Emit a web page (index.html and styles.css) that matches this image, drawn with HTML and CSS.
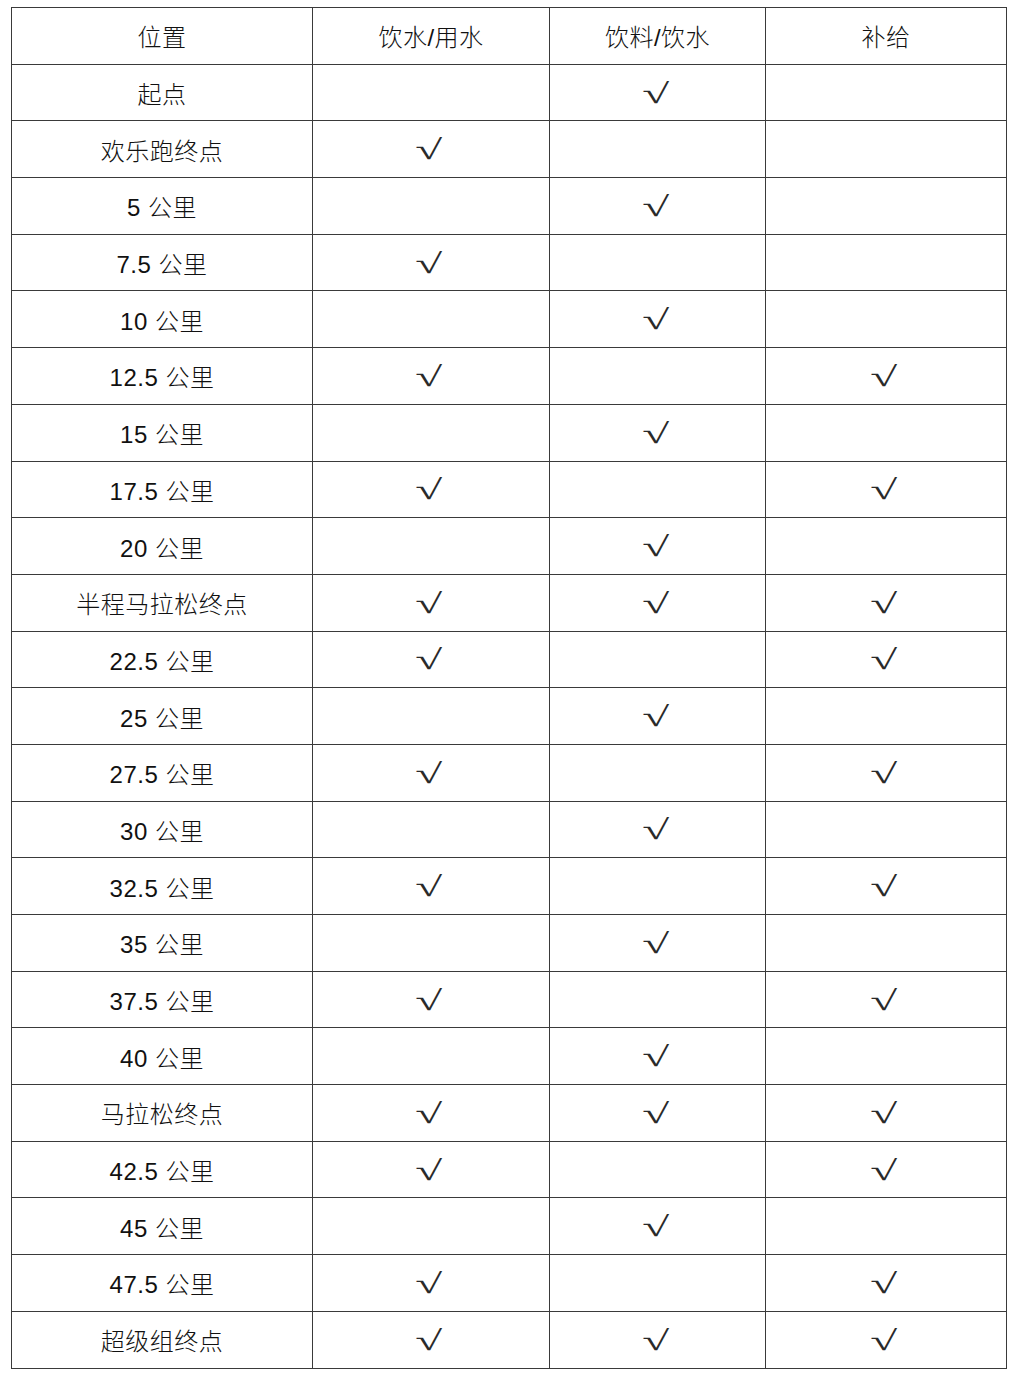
FILE: index.html
```html
<!DOCTYPE html>
<html lang="zh">
<head>
<meta charset="utf-8">
<title>补给站</title>
<link rel="stylesheet" href="styles.css">
</head>
<body>
<table class="supply">
<colgroup><col class="c1"><col class="c2"><col class="c3"><col class="c4"></colgroup>
<thead>
<tr><th>位置</th><th>饮水/用水</th><th>饮料/饮水</th><th>补给</th></tr>
</thead>
<tbody>
<tr><td>起点</td><td></td><td class="ck"><span>√</span></td><td></td></tr>
<tr><td>欢乐跑终点</td><td class="ck"><span>√</span></td><td></td><td></td></tr>
<tr><td>5 公里</td><td></td><td class="ck"><span>√</span></td><td></td></tr>
<tr><td>7.5 公里</td><td class="ck"><span>√</span></td><td></td><td></td></tr>
<tr><td>10 公里</td><td></td><td class="ck"><span>√</span></td><td></td></tr>
<tr><td>12.5 公里</td><td class="ck"><span>√</span></td><td></td><td class="ck"><span>√</span></td></tr>
<tr><td>15 公里</td><td></td><td class="ck"><span>√</span></td><td></td></tr>
<tr><td>17.5 公里</td><td class="ck"><span>√</span></td><td></td><td class="ck"><span>√</span></td></tr>
<tr><td>20 公里</td><td></td><td class="ck"><span>√</span></td><td></td></tr>
<tr><td>半程马拉松终点</td><td class="ck"><span>√</span></td><td class="ck"><span>√</span></td><td class="ck"><span>√</span></td></tr>
<tr><td>22.5 公里</td><td class="ck"><span>√</span></td><td></td><td class="ck"><span>√</span></td></tr>
<tr><td>25 公里</td><td></td><td class="ck"><span>√</span></td><td></td></tr>
<tr><td>27.5 公里</td><td class="ck"><span>√</span></td><td></td><td class="ck"><span>√</span></td></tr>
<tr><td>30 公里</td><td></td><td class="ck"><span>√</span></td><td></td></tr>
<tr><td>32.5 公里</td><td class="ck"><span>√</span></td><td></td><td class="ck"><span>√</span></td></tr>
<tr><td>35 公里</td><td></td><td class="ck"><span>√</span></td><td></td></tr>
<tr><td>37.5 公里</td><td class="ck"><span>√</span></td><td></td><td class="ck"><span>√</span></td></tr>
<tr><td>40 公里</td><td></td><td class="ck"><span>√</span></td><td></td></tr>
<tr><td>马拉松终点</td><td class="ck"><span>√</span></td><td class="ck"><span>√</span></td><td class="ck"><span>√</span></td></tr>
<tr><td>42.5 公里</td><td class="ck"><span>√</span></td><td></td><td class="ck"><span>√</span></td></tr>
<tr><td>45 公里</td><td></td><td class="ck"><span>√</span></td><td></td></tr>
<tr><td>47.5 公里</td><td class="ck"><span>√</span></td><td></td><td class="ck"><span>√</span></td></tr>
<tr><td>超级组终点</td><td class="ck"><span>√</span></td><td class="ck"><span>√</span></td><td class="ck"><span>√</span></td></tr>
</tbody>
</table>
</body>
</html>
```
FILE: styles.css
```css
html, body {
  margin: 0;
  padding: 0;
  background: #fff;
}
body {
  padding: 7px 0 0 11px;
}
.supply {
  border-collapse: collapse;
  table-layout: fixed;
  width: 995px;
  font-family: "Liberation Sans", "Noto Sans CJK SC", sans-serif;
  font-size: 24px;
  font-weight: 300;
  color: #111;
}
.c1 { width: 301px; }
.c2 { width: 237px; }
.c3 { width: 216px; }
.c4 { width: 241px; }
.supply th,
.supply td {
  border: 1.5px solid #3a3a3a;
  height: 56.7px;
  padding: 0;
  text-align: center;
  vertical-align: middle;
  font-weight: 300;
  letter-spacing: 0.5px;
  box-sizing: border-box;
}
.supply td.ck {
  font-family: "Liberation Serif", serif;
  font-size: 28px;
  font-weight: normal;
  letter-spacing: 0;
  color: #2a2a2a;
}
.supply td.ck span {
  display: inline-block;
  transform: translateX(-2px) translateY(1px) scaleX(1.75);
}
```
